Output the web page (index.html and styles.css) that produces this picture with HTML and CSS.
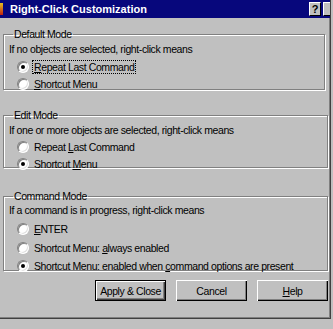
FILE: index.html
```html
<!DOCTYPE html>
<html>
<head>
<meta charset="utf-8">
<link rel="stylesheet" href="styles.css">
</head>
<body>
<div class="dialog">
  <div class="titlebar">
    <span class="appicon"></span>
    <span class="title">Right-Click Customization</span>
    <span class="tbtn help">?</span>
    <span class="tbtn close"></span>
  </div>
  <div class="content">
    <fieldset class="group g1">
      <legend>Default Mode</legend>
      <div class="desc">If no objects are selected, right-click means</div>
      <div class="radio checked"><span class="dot"></span><span class="lbl focus"><u>R</u>epeat Last Command</span></div>
      <div class="radio"><span class="dot"></span><span class="lbl"><u>S</u>hortcut Menu</span></div>
    </fieldset>
    <fieldset class="group g2">
      <legend>Edit Mode</legend>
      <div class="desc">If one or more objects are selected, right-click means</div>
      <div class="radio"><span class="dot"></span><span class="lbl">Repeat <u>L</u>ast Command</span></div>
      <div class="radio checked"><span class="dot"></span><span class="lbl">Shortcut <u>M</u>enu</span></div>
    </fieldset>
    <fieldset class="group g3">
      <legend>Command Mode</legend>
      <div class="desc">If a command is in progress, right-click means</div>
      <div class="radio"><span class="dot"></span><span class="lbl"><u>E</u>NTER</span></div>
      <div class="radio"><span class="dot"></span><span class="lbl">Shortcut Menu: <u>a</u>lways enabled</span></div>
      <div class="radio checked"><span class="dot"></span><span class="lbl">Shortcut Menu: enabled when <u>c</u>ommand options are present</span></div>
    </fieldset>
    <div class="buttons">
      <button class="btn default">Apply &amp; Close</button>
      <button class="btn">Cancel</button>
      <button class="btn"><u>H</u>elp</button>
    </div>
  </div>
</div>
</body>
</html>
```
FILE: styles.css
```css
html, body {
  margin: 0;
  padding: 0;
  background: #c0c0c0;
}
body {
  width: 333px;
  height: 329px;
  overflow: hidden;
  font-family: "Liberation Sans", Arial, sans-serif;
  font-size: 10.5px;
  letter-spacing: -0.4px;
  color: #000;
}
.dialog {
  width: 330px;
  height: 318px;
  border-right: 1px solid #404040;
  border-bottom: 1px solid #404040;
  box-shadow: inset -1px -1px 0 #808080;
}
.titlebar {
  height: 18px;
  background: #07077c;
  display: flex;
  align-items: center;
  letter-spacing: 0;
}
.appicon {
  width: 3px;
  height: 12px;
  background: linear-gradient(#e8c020, #c02010);
  margin-right: 7px;
}
.title {
  color: #fff;
  font-weight: bold;
  font-size: 11px;
  flex: 1;
}
.tbtn {
  height: 12px;
  background: #c0c0c0;
  border-top: 1px solid #fff;
  border-left: 1px solid #fff;
  border-right: 1px solid #000;
  border-bottom: 1px solid #000;
  font-weight: bold;
  font-size: 11px;
  line-height: 12px;
  text-align: center;
  color: #000;
}
.help {
  width: 10px;
  margin-right: 2px;
}
.close {
  width: 6px;
  border-right: none;
}
.content {
  padding: 10px 0 0 3px;
}
.group {
  margin: 0;
  padding: 0 0 0 5px;
  border: 1px solid #808080;
  box-shadow: inset 1px 1px 0 #fff, 1px 1px 0 #fff;
  min-width: 0;
}
.group legend {
  padding: 0 1px;
  margin-left: 4px;
  line-height: 13px;
}
.g1 { width: 315px; height: 60px; }
.g2 { width: 318px; height: 57px; margin-top: 19px; }
.g3 { width: 318px; height: 79px; margin-top: 22px; }
.desc {
  line-height: 14px;
  margin-top: 1px;
  margin-bottom: 2px;
}
.g3 .desc { margin-top: 0; margin-bottom: 3px; }
.radio {
  display: flex;
  align-items: center;
  height: 17px;
  padding-left: 8px;
}
.g1 .radio:first-of-type { margin-top: -1px; }
.g2 .radio { height: 16.5px; }
.g3 .radio { height: 18.5px; }
.dot {
  width: 10px;
  height: 10px;
  border-radius: 50%;
  background: #fff;
  box-shadow: inset 1px 1px 0 #808080, inset -1px -1px 0 #e0e0e0;
  border: 1px solid;
  border-color: #808080 #fff #fff #808080;
  position: relative;
  margin-right: 3px;
  flex: none;
}
.checked .dot::after {
  content: "";
  position: absolute;
  left: 3px;
  top: 3px;
  width: 4px;
  height: 4px;
  border-radius: 50%;
  background: #000;
}
.lbl {
  line-height: 12px;
  padding: 0 1px;
  border: 1px solid transparent;
  white-space: nowrap;
}
.lbl.focus {
  border: 1px dotted #000;
}
.buttons {
  display: flex;
  justify-content: flex-end;
  gap: 10px;
  margin-top: 9px;
  padding-right: 2px;
}
.btn {
  width: 71px;
  height: 21px;
  padding: 0;
  font-family: "Liberation Sans", Arial, sans-serif;
  font-size: 10.5px;
  letter-spacing: -0.4px;
  color: #000;
  background: #c0c0c0;
  border: none;
  box-shadow: inset 1px 1px 0 #fff, inset -1px -1px 0 #000, inset -2px -2px 0 #808080;
}
.btn.default {
  border: 1px solid #000;
  box-shadow: inset 1px 1px 0 #fff, inset -1px -1px 0 #404040, inset -2px -2px 0 #808080;
}
```
